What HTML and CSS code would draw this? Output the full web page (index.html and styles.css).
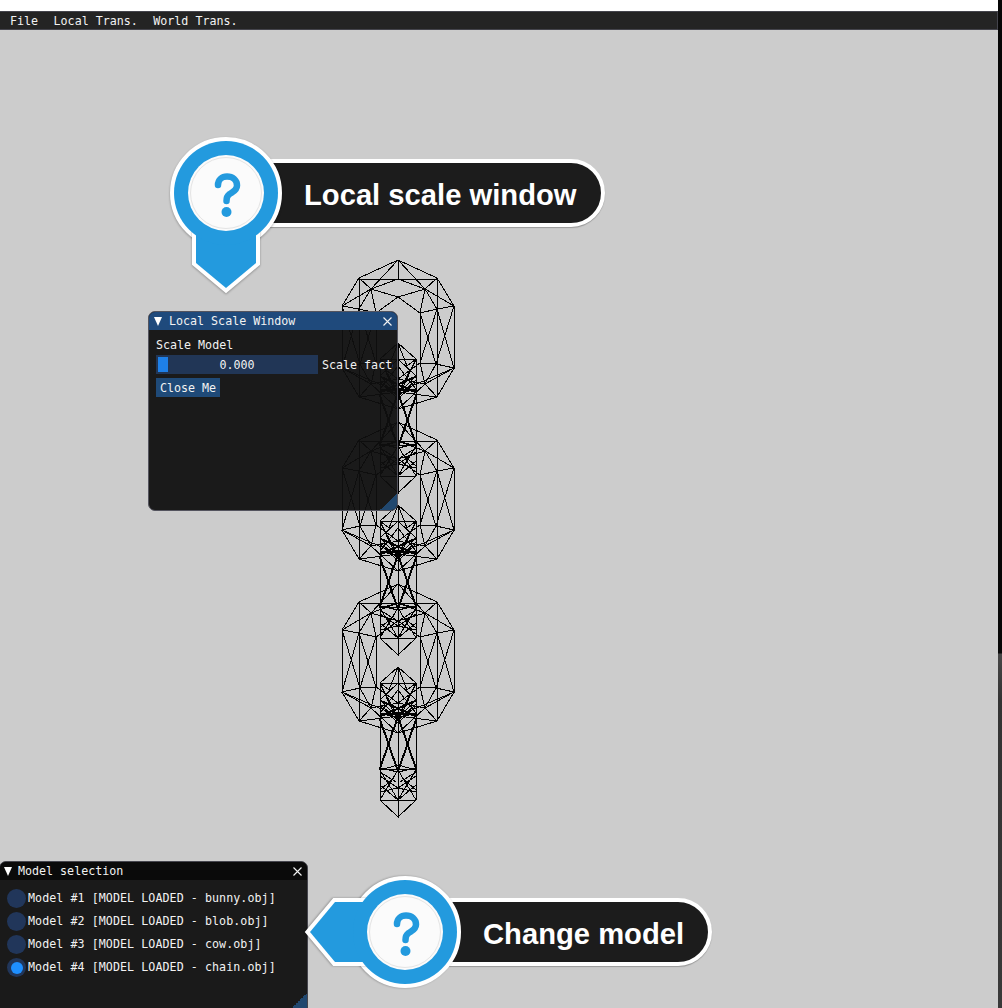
FILE: index.html
```html
<!DOCTYPE html>
<html lang="en">
<head>
<meta charset="utf-8">
<title>Model viewer</title>
<link rel="stylesheet" href="styles.css">
</head>
<body>
<div class="screen">
  <div class="app">
    <div class="top-gap"></div>
    <nav class="menubar">
      <span>File</span>
      <span>Local Trans.</span>
      <span>World Trans.</span>
    </nav>
    <main class="viewport"></main>
  </div>
  <div class="edge"></div>

  <svg class="wire" viewBox="0 0 998 1008" width="998" height="1008" aria-hidden="true">
    <defs>
      <g id="ring-half">
        <path d="M398 260L437 278L454 306V368L437 397L398 409"/>
        <path d="M398 260V279H437M398 260L425 289M398 279L425 289M437 278L425 289L454 306M437 278V397M425 289L437 309L454 306M398 297L425 289L420 313L398 297M420 313L437 309M420 313V363L436 364L454 368L437 309M420 313L436 364M437 309L420 363M454 306L436 364M420 363L425 384L436 364M425 384L454 368M425 384L437 397M420 363L398 379M425 384L398 379M425 384L398 409M454 368L398 392M437 397L398 392"/>
      </g>
      <g id="ring"><use href="#ring-half"/><use href="#ring-half" transform="translate(796 0) scale(-1 1)"/></g>
      <g id="link-half">
        <path d="M398 667L416 683V800L398 817V667M398 683H416M398 667L407 690L416 683"/>
        <path d="M416 683L398 718M416 684L399 719M398 683L416 700L398 718M416 700L380 716M416 701L380 717M398 690L416 713L398 718M416 713L380 713M416 714L380 714M416 716L398 712M416 704L398 721M416 706L398 723M416 718L398 770M417 718L399 770M398 718L416 770M399 718L417 770M416 768L398 772M416 770L398 765M416 769L380 769M416 770L398 800M398 770L416 800M416 785L398 800M416 800H398M416 776L398 788L416 792M416 772L400 782M416 790L402 778"/>
      </g>
      <g id="link"><use href="#link-half"/><use href="#link-half" transform="translate(796 0) scale(-1 1)"/></g>
    </defs>
    <g class="mesh">
      <use href="#ring"/>
      <use href="#ring" transform="translate(0 162)"/>
      <use href="#ring" transform="translate(0 324)"/>
      <use href="#link" transform="translate(0 -324)"/>
      <use href="#link" transform="translate(0 -162)"/>
      <use href="#link"/>
    </g>
  </svg>

  <section class="window window-scale">
    <header class="titlebar titlebar-active">
      <i class="collapse"></i>
      <span class="title">Local Scale Window</span>
      <svg class="close" viewBox="0 0 9 9" width="9" height="9"><path d="M.5 .5L8.5 8.5M8.5 .5L.5 8.5"/></svg>
    </header>
    <div class="body body-scale">
      <div class="line">Scale Model</div>
      <div class="slider-row">
        <div class="slider"><i class="grab"></i><span>0.000</span></div>
        <span class="slider-label">Scale factor</span>
      </div>
      <button class="btn" type="button">Close Me</button>
    </div>
    <i class="grip"></i>
  </section>

  <section class="window window-models">
    <header class="titlebar">
      <i class="collapse"></i>
      <span class="title">Model selection</span>
      <svg class="close" viewBox="0 0 9 9" width="9" height="9"><path d="M.5 .5L8.5 8.5M8.5 .5L.5 8.5"/></svg>
    </header>
    <div class="body body-models">
      <div class="radio-row"><i class="radio"></i><span>Model #1 [MODEL LOADED - bunny.obj]</span></div>
      <div class="radio-row"><i class="radio"></i><span>Model #2 [MODEL LOADED - blob.obj]</span></div>
      <div class="radio-row"><i class="radio"></i><span>Model #3 [MODEL LOADED - cow.obj]</span></div>
      <div class="radio-row"><i class="radio radio-on"></i><span>Model #4 [MODEL LOADED - chain.obj]</span></div>
    </div>
    <i class="grip"></i>
  </section>

  <aside class="callout callout-local">
    <div class="pill">Local scale window</div>
    <svg class="pin" viewBox="-110 -110 220 220" width="220" height="220" aria-hidden="true">
      <g>
        <circle class="pin-edge" r="52"/><path class="pin-edge" d="M-30 30V70L0 95L30 70V30Z"/>
        <path class="pin-fill" d="M-30 30V70L0 95L30 70V30Z"/><circle class="pin-fill" r="52"/>
      </g>
      <circle class="pin-face" r="38"/><circle class="pin-ring" r="35.500"/>
      <path class="pin-q" d="M-8 -8C-8 -13 -4 -16.500 1 -16.500C6.500 -16.500 11 -13 11 -7.500C11 -2 6 -1 3 1.500C1 3 .5 5 .5 8"/>
      <circle class="pin-dot" cx=".5" cy="19" r="5"/>
    </svg>
  </aside>

  <aside class="callout callout-model">
    <div class="pill">Change model</div>
    <svg class="pin" viewBox="-110 -110 220 220" width="220" height="220" aria-hidden="true">
      <g transform="rotate(90)">
        <circle class="pin-edge" r="52"/><path class="pin-edge" d="M-30 30V70L0 95L30 70V30Z"/>
        <path class="pin-fill" d="M-30 30V70L0 95L30 70V30Z"/><circle class="pin-fill" r="52"/>
      </g>
      <circle class="pin-face" r="38"/><circle class="pin-ring" r="35.500"/>
      <path class="pin-q" d="M-8 -8C-8 -13 -4 -16.500 1 -16.500C6.500 -16.500 11 -13 11 -7.500C11 -2 6 -1 3 1.500C1 3 .5 5 .5 8"/>
      <circle class="pin-dot" cx=".5" cy="19" r="5"/>
    </svg>
  </aside>
</div>
</body>
</html>
```
FILE: styles.css
```css
* { box-sizing: border-box; }
html, body { margin: 0; padding: 0; background: #fff; }

.screen {
  position: relative;
  display: flex;
  width: 1002px;
  height: 1008px;
  overflow: hidden;
  font: 11.67px/13px "DejaVu Sans Mono", "Liberation Mono", monospace;
  color: #f2f2f2;
}

.app { flex: 1; display: flex; flex-direction: column; min-width: 0; }
.top-gap { height: 11px; background: #fff; }
.menubar {
  display: flex;
  gap: 15.500px;
  align-items: center;
  height: 19px;
  padding: 2px 0 0 10px;
  background: #242424;
  border-top: 1px solid #44444c;
  border-bottom: 1px solid #44444c;
  border-right: 1px solid #44444c;
}
.viewport { flex: 1; background: #cccccc; }

.edge {
  width: 4px;
  background: linear-gradient(#070707 0, #070707 653px, #474747 654px, #333 700px, #393939 1008px);
}

.wire { position: absolute; left: 0; top: 0; }
.mesh { fill: none; stroke: #000; stroke-width: 1; shape-rendering: crispEdges; }

.window {
  position: absolute;
  display: flex;
  flex-direction: column;
  overflow: hidden;
  background: rgba(15, 15, 15, .94);
  border: 1px solid #54545e;
  border-radius: 7px;
}
.window-scale { left: 148px; top: 311px; width: 250px; height: 200px; }
.window-models { left: -1px; top: 861px; width: 309px; height: 155px; border-color: #46464e; }

.titlebar {
  display: flex;
  flex: none;
  align-items: center;
  height: 18px;
  padding: 0 5px;
  background: #0a0a0a;
}
.titlebar-active { background: #1f4a7c; }
.window-models .titlebar { padding-left: 4px; }
.collapse {
  flex: none;
  width: 0;
  height: 0;
  margin-right: 6px;
  border-left: 4.500px solid transparent;
  border-right: 4.500px solid transparent;
  border-top: 9px solid #fff;
}
.titlebar-active .collapse { margin-right: 7px; }
.title { flex: 1; white-space: nowrap; }
.close { flex: none; fill: none; stroke: #f2f2f2; stroke-width: 1.100; }

.body { flex: 1; min-height: 0; display: flex; flex-direction: column; gap: 4px; overflow: hidden; }
.body-scale { padding: 8px 0 0 7px; margin-right: 4px; }
.body-models { padding: 9px 0 0 7px; letter-spacing: .06px; }
.line { height: 13px; line-height: 15px; }

.slider-row { display: flex; gap: 4px; align-items: center; height: 19px; flex: none; }
.slider {
  position: relative;
  flex: none;
  width: 162px;
  height: 19px;
  background: #213656;
  line-height: 21px;
  text-align: center;
}
.grab { position: absolute; left: 2px; top: 2px; width: 10px; height: 15px; background: #1e80e8; }
.slider-label { white-space: nowrap; padding-top: 2px; }

.btn {
  align-self: flex-start;
  width: 64px;
  height: 19px;
  padding: 2px 0 0;
  border: 0;
  background: #1f4a78;
  color: inherit;
  font: inherit;
  line-height: 17px;
}

.radio-row { display: flex; align-items: center; gap: 2px; height: 19px; flex: none; white-space: nowrap; }
.radio { flex: none; width: 19px; height: 19px; border-radius: 50%; background: #21365a; position: relative; }
.radio-on::after {
  content: "";
  position: absolute;
  left: 3.500px;
  top: 3.500px;
  width: 12px;
  height: 12px;
  border-radius: 50%;
  background: #1e8fff;
}

.grip {
  position: absolute;
  right: 0;
  bottom: 0;
  width: 17px;
  height: 17px;
  background: linear-gradient(135deg, transparent 50%, #21486f 50%);
}
.window-models .grip { bottom: 7px; width: 15px; height: 15px; }

.callout { position: absolute; }
.callout-local { left: 226px; top: 159px; }
.callout-model { left: 405px; top: 898px; }
.pill {
  height: 68px;
  padding: 0 24px 0 74px;
  background: #1c1c1c;
  border: 4px solid #fff;
  border-radius: 34px;
  font: bold 29.200px/64px "Liberation Sans", Arial, sans-serif;
  color: #fff;
  white-space: nowrap;
  box-shadow: 0 1px 1px rgba(0, 0, 0, .25);
}
.pin { position: absolute; left: -110px; top: -76px; overflow: visible; }
.pin-edge { fill: #fff; stroke: #fff; stroke-width: 8; filter: drop-shadow(0 1px 1px rgba(0, 0, 0, .3)); }
.pin-fill { fill: #239ade; }
.pin-face { fill: #fbfbfb; }
.pin-ring { fill: none; stroke: #e4e4e4; stroke-width: 1; }
.pin-q { fill: none; stroke: #239ade; stroke-width: 6.500; stroke-linecap: round; stroke-linejoin: round; }
.pin-dot { fill: #239ade; }
```
